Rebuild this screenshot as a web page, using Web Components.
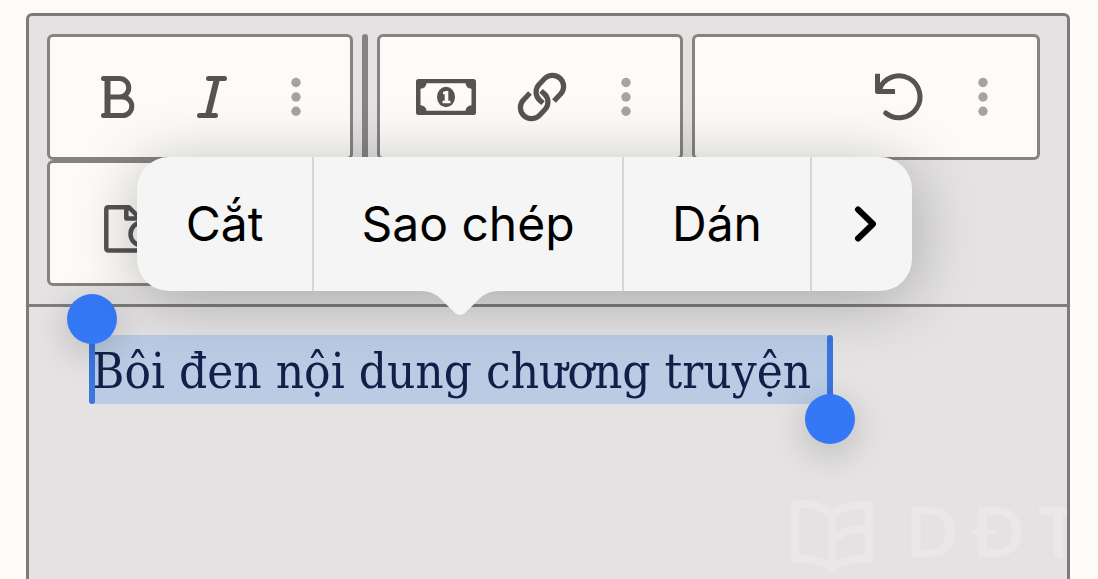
<!DOCTYPE html>
<html lang="vi">
<head>
<meta charset="utf-8">
<meta name="viewport" content="width=device-width, initial-scale=1">
<title>Soạn thảo chương truyện</title>
<style>
  html, body { margin: 0; background: #fcfbf8; }
  body { font-family: Inter, "Noto Sans", sans-serif; }
</style>
</head>
<body>
<story-editor>
  <editor-toolbar slot="toolbar">
    <tool-group>
      <tool-button label="Đậm" icon="bold"></tool-button>
      <tool-button label="Nghiêng" icon="italic"></tool-button>
      <tool-button label="Thêm định dạng" icon="more" narrow></tool-button>
    </tool-group>
    <tool-separator></tool-separator>
    <tool-group>
      <tool-button label="Trả phí" icon="money"></tool-button>
      <tool-button label="Liên kết" icon="link"></tool-button>
      <tool-button label="Thêm chèn" icon="more" narrow></tool-button>
    </tool-group>
    <tool-group wide>
      <tool-button label="Hoàn tác" icon="undo"></tool-button>
      <tool-button label="Thêm thao tác" icon="more" narrow></tool-button>
    </tool-group>
    <tool-group start>
      <tool-button label="Xem trước" icon="preview"></tool-button>
    </tool-group>
  </editor-toolbar>
  <selected-text>Bôi đen nội dung chương truyện</selected-text>
  <site-watermark slot="overlay"></site-watermark>
  <callout-menu slot="overlay"></callout-menu>
</story-editor>

<script>
const define = (name, html, setup) => {
  const template = document.createElement('template');
  template.innerHTML = html;
  customElements.define(name, class extends HTMLElement {
    connectedCallback() {
      if (this.shadowRoot) return;
      const root = this.attachShadow({ mode: 'open' });
      root.append(template.content.cloneNode(true));
      if (setup) setup(this, root);
    }
  });
};

const icons = {
  bold: '<g fill="none" stroke="currentColor" stroke-width="5" stroke-linecap="round" stroke-linejoin="round"><path d="M17.500 11.500H33.500a9.300 9.300 0 0 1 0 18.600H22M33.500 30h3a9.300 9.300 0 0 1 0 18.600H17.500"/><path stroke-width="6" stroke-linecap="butt" d="M21.500 11v38"/></g>',
  italic: '<g fill="none" stroke="currentColor" stroke-width="5" stroke-linecap="round"><path d="M26.500 11.500h16M17.500 48.500h16"/><path stroke-width="6" stroke-linecap="butt" d="M35 11.500L26 48.500"/></g>',
  more: '<g fill="#a5a4a2"><circle cx="30" cy="15.500" r="4.700"/><circle cx="30" cy="30" r="4.700"/><circle cx="30" cy="44.300" r="4.700"/></g>',
  money: '<path fill="currentColor" fill-rule="evenodd" d="M2.500 12h55a2.500 2.500 0 0 1 2.500 2.500v31a2.500 2.500 0 0 1-2.500 2.500h-55a2.500 2.500 0 0 1-2.500-2.500v-31a2.500 2.500 0 0 1 2.500-2.500zM10.500 16.300q-.5 5-6 5.500v16.400q5.500.5 6 5.500h39q.5-5 6-5.500v-16.400q-5.500-.5-6-5.500z"/><ellipse cx="30" cy="30" rx="9" ry="10.200" fill="currentColor"/><path fill="none" stroke="#fcfbf8" stroke-width="2.500" d="M27 26h3.500"/><path fill="none" stroke="#fcfbf8" stroke-width="3.600" d="M30.500 24v11"/><path fill="none" stroke="#fcfbf8" stroke-width="2.500" d="M26.500 35h8"/>',
  link: '<g fill="none" stroke="currentColor" stroke-width="5.200"><path d="M42 34L48.300 27.300A11 11 0 0 0 32.700 11.500L27 17.500A11 11 0 0 0 27.500 33L31 36.200"/><path d="M18 26L11.700 32.700A11 11 0 0 0 27.300 48.500L33 42.500A11 11 0 0 0 32.500 27L29 23.800"/></g>',
  undo: '<g fill="none" stroke="currentColor" stroke-width="5"><path stroke-linecap="round" d="M10.500 22A21 21 0 1 1 16.700 46"/><path stroke-linejoin="round" d="M8.500 6.700V24.500H26"/></g>',
  preview: '<g fill="none" stroke="currentColor" stroke-width="4.500" stroke-linejoin="round"><path d="M58 57.500H22.500q-2.200 0-2.200-2.200V16.500q0-2.200 2.200-2.200H43L55 26.500M40.300 14.300V25.500H53"/><circle cx="56" cy="41" r="11.500"/></g>'
};

define('tool-button', `
  <style>
    :host { display: block; width: 96px; }
    :host([narrow]) { width: 72px; }
    button { display: grid; place-items: center; width: 100%; height: 120px; margin: 0; padding: 0; border: 0; background: none; color: #555453; }
    svg { display: block; width: 60px; height: 60px; overflow: visible; }
  </style>
  <button type="button"></button>`, (host, root) => {
  const button = root.querySelector('button');
  button.setAttribute('aria-label', host.getAttribute('label'));
  button.innerHTML = '<svg viewBox="0 0 60 60" aria-hidden="true">' + icons[host.getAttribute('icon')] + '</svg>';
});

define('tool-group', `
  <style>
    :host { display: flex; justify-content: flex-end; box-sizing: border-box; min-width: 306px; padding: 0 18px; border: 3px solid #858482; border-radius: 6px; background: #fcfbf8; }
    :host([wide]) { min-width: 348px; }
    :host([start]) { justify-content: flex-start; }
  </style>
  <slot></slot>`);

define('tool-separator', `
  <style>
    :host { display: block; width: 6px; border-radius: 3px; background: #858482; }
  </style>`);

define('editor-toolbar', `
  <style>
    :host { display: block; }
    [role=toolbar] { display: flex; flex-wrap: wrap; column-gap: 9px; padding: 18px; border-bottom: 3px solid #7f7e7d; }
  </style>
  <div role="toolbar" aria-label="Công cụ soạn thảo"><slot></slot></div>`);

define('selected-text', `
  <style>
    :host { display: inline-block; position: relative; height: 69px; padding-right: 19px; background: #bacce4; color: #11204a; font: 49px/74px "Roboto Slab", "DejaVu Serif Condensed", "DejaVu Serif", serif; white-space: nowrap; }
    .stem { position: absolute; top: 0; bottom: 0; width: 6px; border-radius: 3px; background: #3c74e0; }
    .from { left: -3px; }
    .to { right: -3px; }
    .stem::after { content: ""; position: absolute; left: -22px; width: 50px; height: 50px; border-radius: 50%; background: #3478f6; box-shadow: 0 9px 36px rgba(0, 0, 0, .2); }
    .from::after { top: -41px; }
    .to::after { bottom: -40px; }
  </style>
  <slot></slot><span class="stem from"></span><span class="stem to"></span>`);

define('site-watermark', `
  <style>
    :host { position: absolute; left: 761px; bottom: 0; display: flex; align-items: flex-start; gap: 32px; height: 80px; color: rgba(255, 255, 255, .2); pointer-events: none; }
    svg { width: 84px; height: 76px; }
    p { display: flex; gap: 14px; margin: 0; font: 700 68px/64px Lato, sans-serif; }
  </style>
  <svg viewBox="0 0 84 76" fill="none" stroke="currentColor" stroke-width="8" aria-hidden="true"><path d="M42 15Q25 2 5 6V60Q25 58 42 69Q59 58 79 60V6Q59 4 42 15V69M46 38Q57 29 75 30"/></svg>
  <p><span>D</span><span>Đ</span><span>T</span></p>`);

define('callout-menu', `
  <style>
    :host { position: absolute; left: 108px; top: 141px; }
    [role=menu] { display: grid; grid-template-columns: 177px 310px 188px 100px; height: 134px; border-radius: 32px; background: #f5f5f5; box-shadow: 0 9px 64px rgba(0, 0, 0, .27); }
    button { margin: 0; padding: 0; border: 0; border-right: 2px solid #d5d5d5; background: none; color: #000; font: 48px/134px Inter, "Noto Sans", sans-serif; white-space: nowrap; }
    button:last-child { display: grid; place-items: center; padding-left: 8px; border-right: 0; }
    .chevron { width: 24px; height: 38px; }
    .tail { position: absolute; left: 284px; top: 133px; width: 78px; height: 26px; }
  </style>
  <div role="menu">
    <button type="button" role="menuitem">Cắt</button>
    <button type="button" role="menuitem">Sao chép</button>
    <button type="button" role="menuitem">Dán</button>
    <button type="button" role="menuitem" aria-label="Thêm"><svg class="chevron" viewBox="0 0 24 38" fill="none" stroke="#000" stroke-width="6" stroke-linecap="round" stroke-linejoin="round" aria-hidden="true"><path d="M4 4.500L19 19L4 33.500"/></svg></button>
  </div>
  <svg class="tail" viewBox="0 0 78 26" aria-hidden="true"><path fill="#f5f5f5" d="M0 0V1Q12 1 20 9L34 23Q39 27 44 23L58 9Q66 1 78 1V0Z"/></svg>`);

define('story-editor', `
  <style>
    :host { display: flex; box-sizing: border-box; height: 100vh; padding: 13px 28px 0 26px; overflow: hidden; }
    main { position: relative; flex: 1; min-width: 0; border: 3px solid #7c7b79; border-bottom: 0; border-radius: 6px 6px 0 0; background: #e4e2e3; }
    .content { position: relative; padding: 28px 63px; outline: 0; caret-color: transparent; }
    .overlays { position: absolute; inset: 0; overflow: hidden; }
  </style>
  <main>
    <slot name="toolbar"></slot>
    <div class="content" role="textbox" aria-multiline="true" aria-label="Nội dung chương" contenteditable="true"><slot></slot></div>
    <div class="overlays"><slot name="overlay"></slot></div>
  </main>`);
</script>
</body>
</html>
